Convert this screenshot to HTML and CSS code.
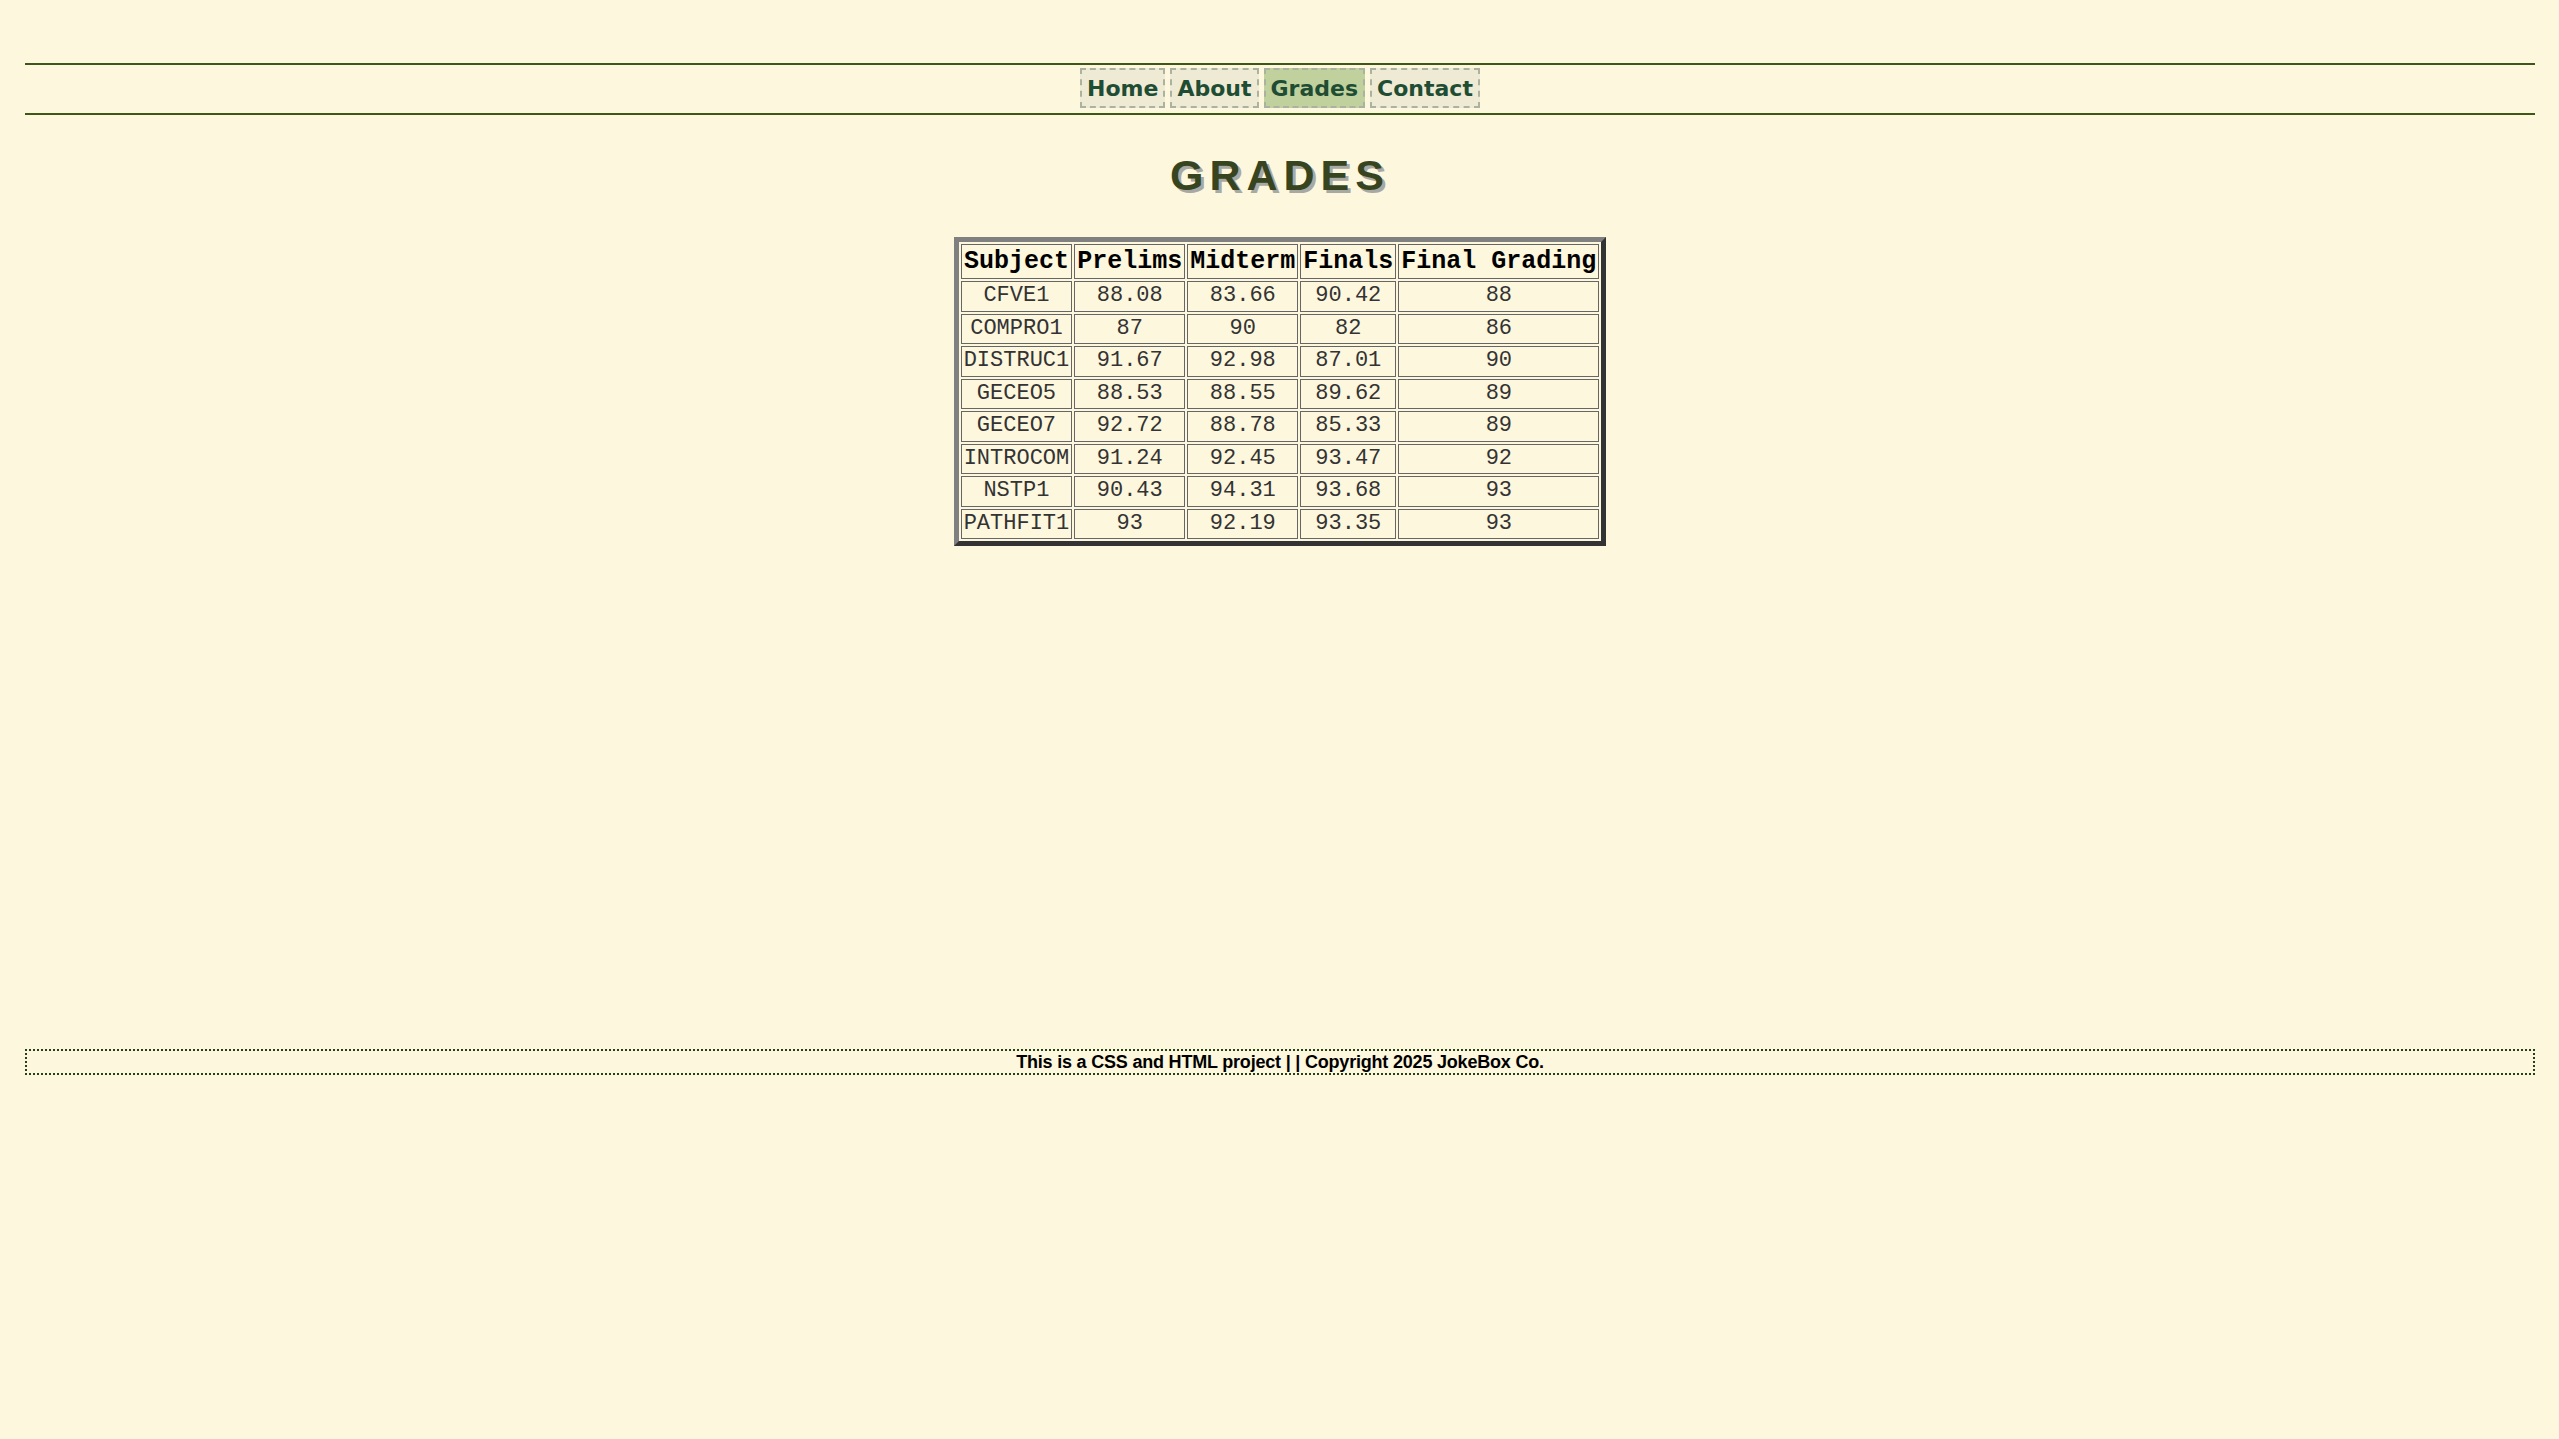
FILE: index.html
```html
<!DOCTYPE html>
<html lang="en">
<head>
<meta charset="utf-8">
<title>Grades</title>
<link rel="stylesheet" href="styles.css">
</head>
<body>
<div class="page">
  <header class="site-header">
    <nav class="nav">
      <a class="nav-link" href="#">Home</a>
      <a class="nav-link" href="#">About</a>
      <a class="nav-link active" href="#">Grades</a>
      <a class="nav-link" href="#">Contact</a>
    </nav>
  </header>
  <main class="main">
    <h1 class="title">GRADES</h1>
    <table class="grades">
      <thead>
        <tr><th>Subject</th><th>Prelims</th><th>Midterm</th><th>Finals</th><th>Final Grading</th></tr>
      </thead>
      <tbody>
        <tr><td>CFVE1</td><td>88.08</td><td>83.66</td><td>90.42</td><td>88</td></tr>
        <tr><td>COMPRO1</td><td>87</td><td>90</td><td>82</td><td>86</td></tr>
        <tr><td>DISTRUC1</td><td>91.67</td><td>92.98</td><td>87.01</td><td>90</td></tr>
        <tr><td>GECEO5</td><td>88.53</td><td>88.55</td><td>89.62</td><td>89</td></tr>
        <tr><td>GECEO7</td><td>92.72</td><td>88.78</td><td>85.33</td><td>89</td></tr>
        <tr><td>INTROCOM</td><td>91.24</td><td>92.45</td><td>93.47</td><td>92</td></tr>
        <tr><td>NSTP1</td><td>90.43</td><td>94.31</td><td>93.68</td><td>93</td></tr>
        <tr><td>PATHFIT1</td><td>93</td><td>92.19</td><td>93.35</td><td>93</td></tr>
      </tbody>
    </table>
  </main>
  <footer class="footer">This is a CSS and HTML project | | Copyright 2025 JokeBox Co.</footer>
</div>
</body>
</html>
```

FILE: styles.css
```css
html, body {
  margin: 0;
  padding: 0;
  background: #fdf7de;
}

.page {
  padding: 63px 24px 0 25px;
}

.nav {
  display: flex;
  justify-content: center;
  gap: 5px;
  border-top: 2px solid #3e5616;
  border-bottom: 2px solid #3e5616;
  padding: 3px 0 5px;
}

.nav-link {
  display: block;
  font-family: "DejaVu Sans", Verdana, sans-serif;
  font-weight: bold;
  font-size: 22px;
  line-height: 26px;
  color: #1f4d34;
  text-decoration: none;
  padding: 6px 5px 4px;
  border: 2px dashed #abb3a0;
  background: #efead4;
}

.nav-link.active {
  background: #c1d19e;
}

.main {
  min-height: 934px;
  box-sizing: border-box;
  padding-top: 35px;
  display: flex;
  flex-direction: column;
  align-items: center;
}

.title {
  margin: 0 0 37px;
  font-family: "Liberation Sans", Arial, sans-serif;
  font-weight: bold;
  font-size: 43px;
  line-height: 50px;
  letter-spacing: 6px;
  color: #36451f;
  text-shadow: 3px 3px 0 #a9a9a4;
}

.grades {
  border-collapse: separate;
  border-spacing: 2px;
  border: 5px solid;
  border-color: #808080 #333333 #333333 #808080;
  font-family: "Liberation Mono", "Courier New", monospace;
}

.grades th,
.grades td {
  border: 1px solid #666666;
  padding: 2px 2px;
  text-align: center;
}

.grades th {
  font-size: 25px;
  line-height: 29px;
  font-weight: bold;
  color: #000;
}

.grades td {
  font-size: 22px;
  line-height: 24.5px;
  color: #333333;
}

.footer {
  border: 2px dotted #23421a;
  font-family: "Liberation Sans", Arial, sans-serif;
  font-weight: bold;
  font-size: 18px;
  line-height: 22px;
  letter-spacing: -0.2px;
  text-align: center;
  color: #000;
}
```
